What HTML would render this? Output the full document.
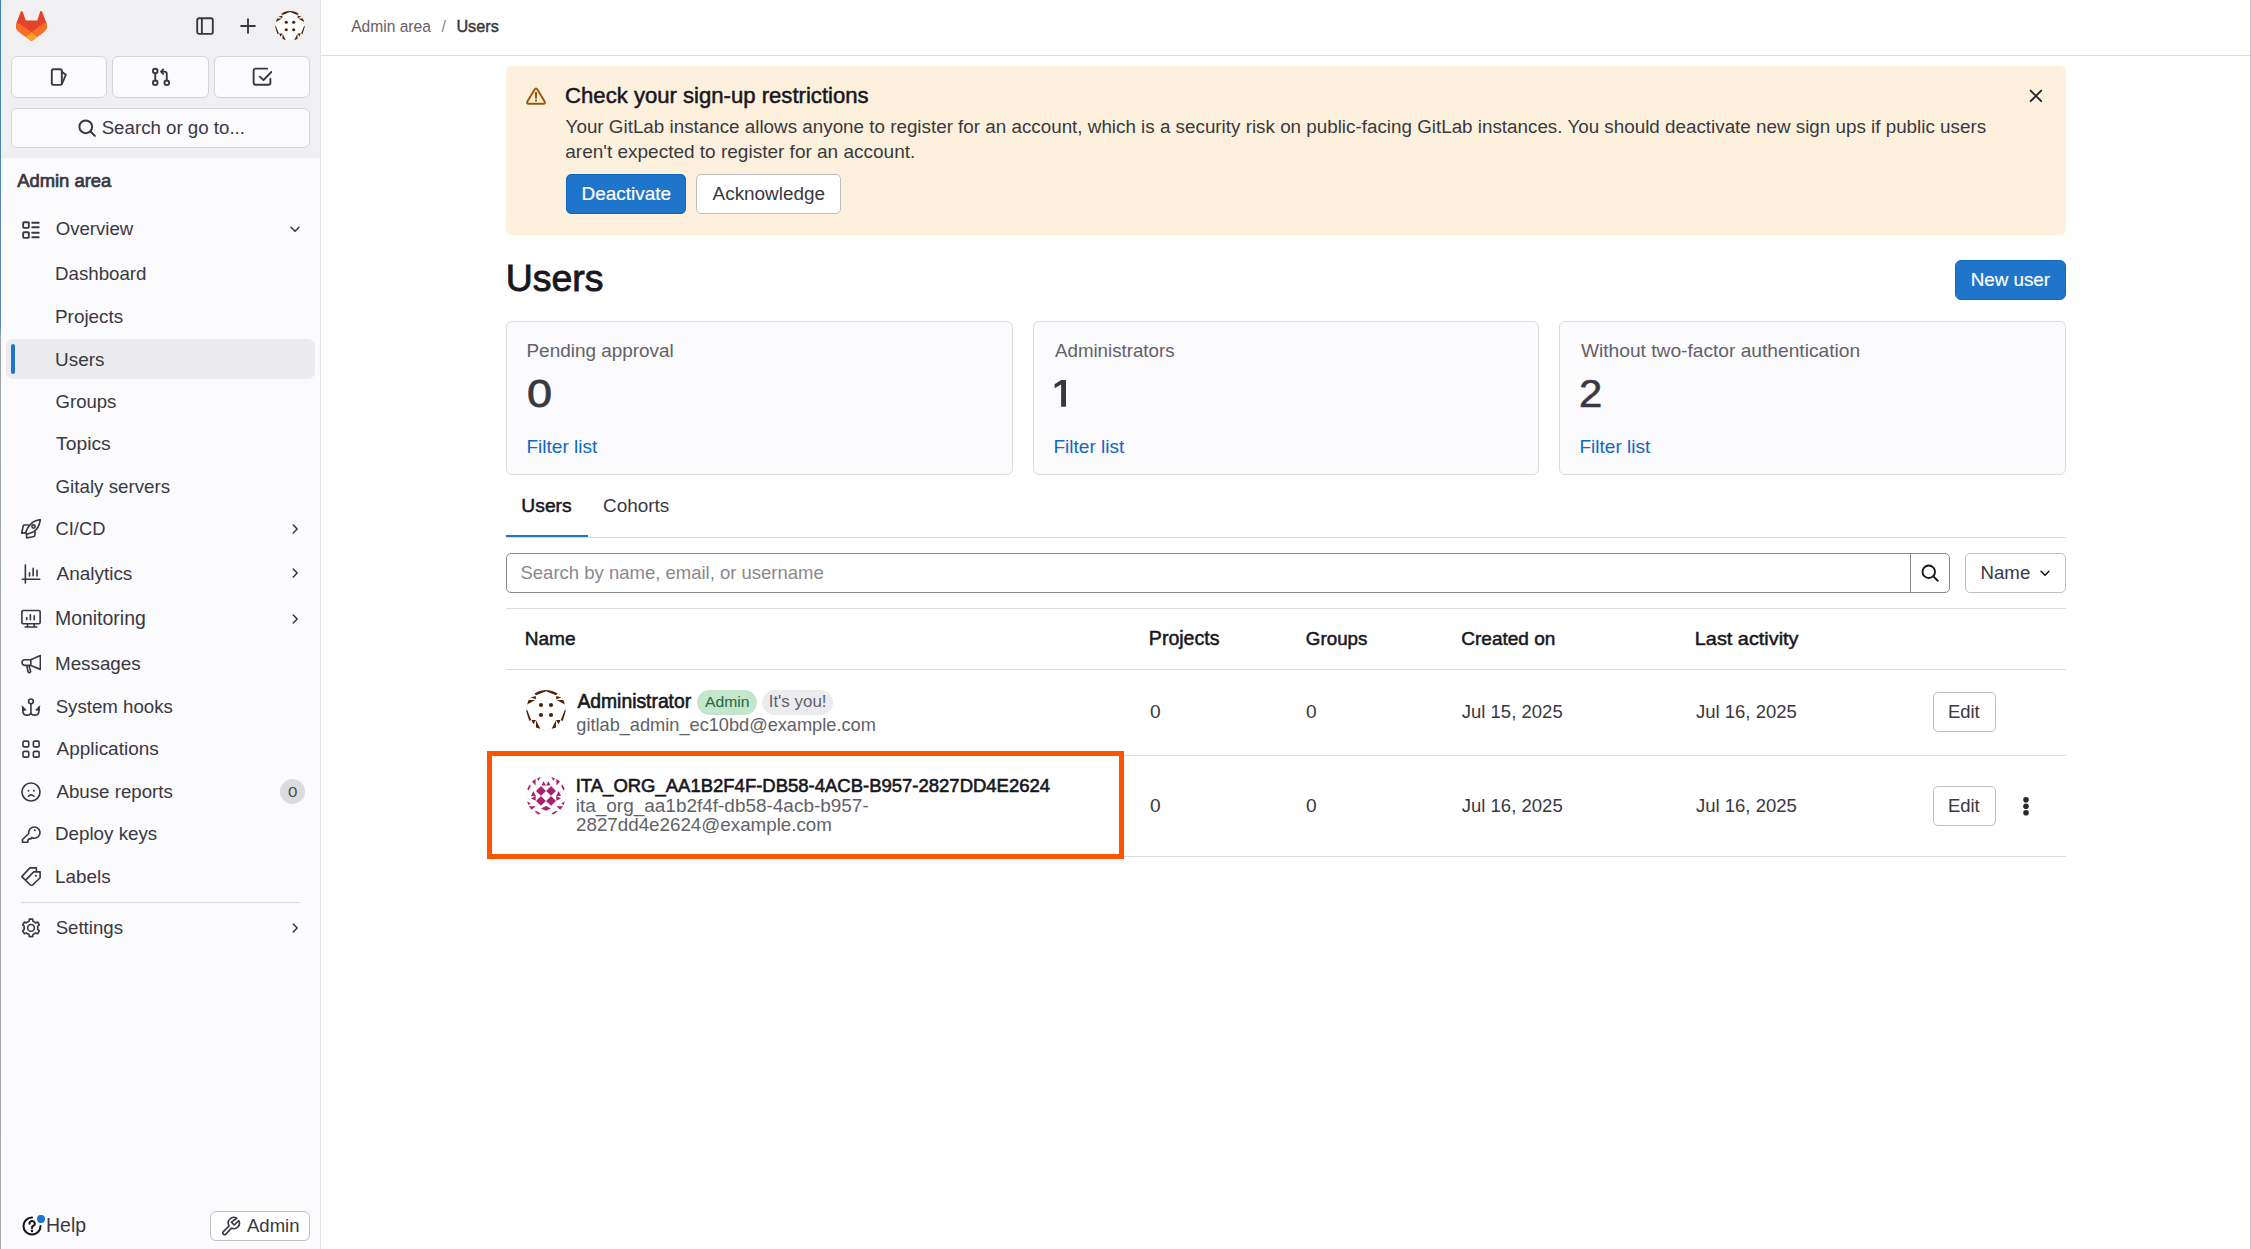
<!DOCTYPE html>
<html><head><meta charset="utf-8"><style>
html,body{margin:0;padding:0;}
body{width:2251px;height:1249px;position:relative;overflow:hidden;background:#fff;font-family:"Liberation Sans",sans-serif;}
.a{position:absolute;box-sizing:border-box;}
.t{position:absolute;white-space:pre;line-height:normal;}
</style></head><body>
<div class="a" style="left:0.0px;top:0.0px;width:320.0px;height:1249.0px;background:#fbfafd;"></div>
<div class="a" style="left:0.0px;top:0.0px;width:320.0px;height:158.0px;background:#f0f0f2;"></div>
<div class="a" style="left:320.0px;top:0.0px;width:1.0px;height:1249.0px;background:#e2e1e6;"></div>
<div class="a" style="left:0.0px;top:0.0px;width:1.0px;height:1249.0px;background:linear-gradient(#3f7fc6 0,#5a8cc0 26%,#9aa4ae 27%,#a8a8aa 100%);"></div>
<svg class="a" style="left:16.0px;top:11.0px;" width="31.0" height="30.0" viewBox="0 0 25 24"><path fill="#e24329" d="m24.507 9.5-.034-.09L21.082.562a.896.896 0 0 0-1.694.091l-2.29 7.01H7.825L5.535.653a.898.898 0 0 0-1.694-.09L.451 9.411.416 9.5a6.297 6.297 0 0 0 2.09 7.278l.012.01.03.022 5.16 3.867 2.56 1.935 1.554 1.176a1.051 1.051 0 0 0 1.268 0l1.555-1.176 2.56-1.935 5.197-3.89.014-.01A6.297 6.297 0 0 0 24.507 9.5Z"/><path fill="#fc6d26" d="m24.507 9.5-.034-.09a11.44 11.44 0 0 0-4.56 2.051l-7.447 5.632 4.742 3.584 5.197-3.89.014-.01A6.297 6.297 0 0 0 24.507 9.5Z"/><path fill="#fca326" d="m7.707 20.677 2.56 1.935 1.555 1.176a1.051 1.051 0 0 0 1.268 0l1.555-1.176 2.56-1.935-4.743-3.584-4.755 3.584Z"/><path fill="#fc6d26" d="M5.01 11.461a11.43 11.43 0 0 0-4.56-2.05L.416 9.5a6.297 6.297 0 0 0 2.09 7.278l.012.01.03.022 5.16 3.867 4.745-3.584-7.444-5.632Z"/></svg>
<svg class="a" style="left:195.0px;top:16.0px;" width="20.0" height="20.0" viewBox="0 0 16 16"><rect x="1.75" y="1.75" width="12.5" height="12.5" rx="1.5" fill="none" stroke="#3a383f" stroke-width="1.5" stroke-linecap="round" stroke-linejoin="round"/><path d="M5.5 2v12" fill="none" stroke="#3a383f" stroke-width="1.5" stroke-linecap="round" stroke-linejoin="round"/></svg>
<svg class="a" style="left:238.0px;top:16.0px;" width="20.0" height="20.0" viewBox="0 0 16 16"><path d="M8 2.5v11M2.5 8h11" fill="none" stroke="#3a383f" stroke-width="1.5" stroke-linecap="round" stroke-linejoin="round"/></svg>
<svg class="a" style="left:275.0px;top:10.8px;" width="30.0" height="30.0" viewBox="0 0 40 40"><defs><clipPath id="ca10"><circle cx="20" cy="20" r="20"/></clipPath></defs><circle cx="20" cy="20" r="19.7" fill="#fff" stroke="#ececef" stroke-width="0.6"/><g clip-path="url(#ca10)"><polygon points="8.00,3.00 20.00,-3.00 20.00,1.30 10.00,5.30" fill="#4f2207"/><polygon points="32.00,3.00 20.00,-3.00 20.00,1.30 30.00,5.30" fill="#4f2207"/><polygon points="4.50,7.50 9.80,5.90 9.80,9.30" fill="#4f2207"/><polygon points="35.50,7.50 30.20,5.90 30.20,9.30" fill="#4f2207"/><polygon points="2.30,9.90 9.30,9.90 1.10,14.60" fill="#4f2207"/><polygon points="37.70,9.90 30.70,9.90 38.90,14.60" fill="#4f2207"/><polygon points="0.00,20.30 1.20,20.00 5.20,30.00 3.30,31.00" fill="#4f2207"/><polygon points="40.00,20.30 38.80,20.00 34.80,30.00 36.70,31.00" fill="#4f2207"/><polygon points="5.50,30.00 10.00,30.00 7.40,34.30" fill="#4f2207"/><polygon points="34.50,30.00 30.00,30.00 32.60,34.30" fill="#4f2207"/><polygon points="10.00,30.30 10.00,38.00 14.30,38.80" fill="#4f2207"/><polygon points="30.00,30.30 30.00,38.00 25.70,38.80" fill="#4f2207"/><circle cx="15" cy="15" r="2.1" fill="#4f2207"/><circle cx="25" cy="15" r="2.1" fill="#4f2207"/><circle cx="15" cy="25" r="2.1" fill="#4f2207"/><circle cx="25" cy="25" r="2.1" fill="#4f2207"/></g></svg>
<div class="a" style="left:11.0px;top:56.0px;width:96.0px;height:42.0px;background:#fbfafd;border:1px solid #d5d5d9;border-radius:6px;"></div>
<div class="a" style="left:112.0px;top:56.0px;width:97.0px;height:42.0px;background:#fbfafd;border:1px solid #d5d5d9;border-radius:6px;"></div>
<div class="a" style="left:214.0px;top:56.0px;width:96.0px;height:42.0px;background:#fbfafd;border:1px solid #d5d5d9;border-radius:6px;"></div>
<svg class="a" style="left:49.0px;top:67.0px;" width="20.0" height="20.0" viewBox="0 0 16 16"><rect x="2.25" y="1.75" width="8" height="12.5" rx="1.25" fill="none" stroke="#3a383f" stroke-width="1.5" stroke-linecap="round" stroke-linejoin="round"/><path d="M10.5 4 L13.5 6.2 L10.3 13.6" fill="none" stroke="#3a383f" stroke-width="1.5" stroke-linecap="round" stroke-linejoin="round"/></svg>
<svg class="a" style="left:151.0px;top:67.0px;" width="20.0" height="20.0" viewBox="0 0 16 16"><circle cx="3.4" cy="3.2" r="1.85" fill="none" stroke="#3a383f" stroke-width="1.5" stroke-linecap="round" stroke-linejoin="round"/><circle cx="3.4" cy="12.6" r="1.85" fill="none" stroke="#3a383f" stroke-width="1.5" stroke-linecap="round" stroke-linejoin="round"/><circle cx="12.6" cy="12.6" r="1.85" fill="none" stroke="#3a383f" stroke-width="1.5" stroke-linecap="round" stroke-linejoin="round"/><path d="M3.4 5v5.8M12.6 10.8V5.6a1.9 1.9 0 0 0-1.9-1.9H8.3M9.8 1.9 8 3.7l1.8 1.8" fill="none" stroke="#3a383f" stroke-width="1.5" stroke-linecap="round" stroke-linejoin="round"/></svg>
<svg class="a" style="left:252.0px;top:67.0px;" width="20.0" height="20.0" viewBox="0 0 16 16"><path d="M12.2 1.3H2.9A1.6 1.6 0 0 0 1.3 2.9V12.6A1.6 1.6 0 0 0 2.9 14.2H13.1A1.6 1.6 0 0 0 14.7 12.6V9.3" fill="none" stroke="#3a383f" stroke-width="1.5" stroke-linecap="round" stroke-linejoin="round"/><path d="M6.2 7.7 9.2 10.4 15.5 4" fill="none" stroke="#3a383f" stroke-width="1.5" stroke-linecap="round" stroke-linejoin="round"/></svg>
<div class="a" style="left:11.0px;top:108.0px;width:299.0px;height:40.0px;background:#fbfafd;border:1px solid #d5d5d9;border-radius:6px;"></div>
<svg class="a" style="left:77.0px;top:117.5px;" width="20.0" height="20.0" viewBox="0 0 16 16"><circle cx="7" cy="7" r="5.1" fill="none" stroke="#3a383f" stroke-width="1.6"/><path d="M10.8 10.8 14.3 14.3" fill="none" stroke="#3a383f" stroke-width="1.6" stroke-linecap="round"/></svg>
<div class="t" style="left:101.66px;top:117.00px;font-size:18.69px;color:#3a383f;">Search or go to...</div>
<div class="t" style="left:17.20px;top:170.00px;font-size:18.42px;color:#3a383f;-webkit-text-stroke:0.70px #3a383f;">Admin area</div>
<svg class="a" style="left:21.0px;top:220.0px;" width="20.0" height="20.0" viewBox="0 0 16 16"><rect x="1.75" y="1.75" width="4.5" height="4.5" rx="0.6" fill="none" stroke="#3a383f" stroke-width="1.5" stroke-linecap="round" stroke-linejoin="round"/><rect x="1.75" y="9.75" width="4.5" height="4.5" rx="0.6" fill="none" stroke="#3a383f" stroke-width="1.5" stroke-linecap="round" stroke-linejoin="round"/><path d="M9 2.2h5.2M9 5.8h5.2M9 10.2h5.2M9 13.8h5.2" fill="none" stroke="#3a383f" stroke-width="1.5" stroke-linecap="round" stroke-linejoin="round"/></svg>
<div class="t" style="left:55.66px;top:218.00px;font-size:18.62px;color:#3a383f;">Overview</div>
<svg class="a" style="left:288.0px;top:222.0px;" width="14.0" height="14.0" viewBox="0 0 16 16"><path d="M3.5 6 8 10.5 12.5 6" fill="none" stroke="#3a383f" stroke-width="1.8" stroke-linecap="round" stroke-linejoin="round"/></svg>
<div class="a" style="left:6.0px;top:339.0px;width:309.0px;height:40.0px;background:#ececef;border-radius:7px;"></div>
<div class="a" style="left:11.0px;top:344.0px;width:4.0px;height:29.5px;background:#1f75cb;border-radius:2px;"></div>
<div class="t" style="left:55.00px;top:263.00px;font-size:18.72px;color:#3a383f;">Dashboard</div>
<div class="t" style="left:54.99px;top:306.00px;font-size:18.91px;color:#3a383f;">Projects</div>
<div class="t" style="left:55.08px;top:349.00px;font-size:18.92px;color:#3a383f;">Users</div>
<div class="t" style="left:55.57px;top:391.00px;font-size:18.56px;color:#3a383f;">Groups</div>
<div class="t" style="left:56.11px;top:433.00px;font-size:19.28px;color:#3a383f;">Topics</div>
<div class="t" style="left:55.56px;top:476.00px;font-size:18.74px;color:#3a383f;">Gitaly servers</div>
<div class="t" style="left:55.59px;top:518.00px;font-size:18.29px;color:#3a383f;">CI/CD</div>
<svg class="a" style="left:288.0px;top:521.8px;" width="14.0" height="14.0" viewBox="0 0 16 16"><path d="M6 3.5 10.5 8 6 12.5" fill="none" stroke="#3a383f" stroke-width="1.8" stroke-linecap="round" stroke-linejoin="round"/></svg>
<div class="t" style="left:56.50px;top:563.00px;font-size:18.97px;color:#3a383f;">Analytics</div>
<svg class="a" style="left:288.0px;top:566.2px;" width="14.0" height="14.0" viewBox="0 0 16 16"><path d="M6 3.5 10.5 8 6 12.5" fill="none" stroke="#3a383f" stroke-width="1.8" stroke-linecap="round" stroke-linejoin="round"/></svg>
<div class="t" style="left:54.94px;top:607.00px;font-size:19.47px;color:#3a383f;">Monitoring</div>
<svg class="a" style="left:288.0px;top:611.5px;" width="14.0" height="14.0" viewBox="0 0 16 16"><path d="M6 3.5 10.5 8 6 12.5" fill="none" stroke="#3a383f" stroke-width="1.8" stroke-linecap="round" stroke-linejoin="round"/></svg>
<div class="t" style="left:55.00px;top:653.00px;font-size:18.81px;color:#3a383f;">Messages</div>
<div class="t" style="left:55.66px;top:696.00px;font-size:18.68px;color:#3a383f;">System hooks</div>
<div class="t" style="left:56.50px;top:738.00px;font-size:18.97px;color:#3a383f;">Applications</div>
<div class="t" style="left:56.50px;top:781.00px;font-size:18.69px;color:#3a383f;">Abuse reports</div>
<div class="t" style="left:55.00px;top:823.00px;font-size:18.78px;color:#3a383f;">Deploy keys</div>
<div class="t" style="left:54.99px;top:866.00px;font-size:18.87px;color:#3a383f;">Labels</div>
<div class="t" style="left:55.66px;top:917.00px;font-size:18.64px;color:#3a383f;">Settings</div>
<svg class="a" style="left:288.0px;top:920.5px;" width="14.0" height="14.0" viewBox="0 0 16 16"><path d="M6 3.5 10.5 8 6 12.5" fill="none" stroke="#3a383f" stroke-width="1.8" stroke-linecap="round" stroke-linejoin="round"/></svg>
<svg class="a" style="left:21.0px;top:519.0px;" width="20.0" height="20.0" viewBox="0 0 16 16"><path d="M15.5 0.5C11 1 7.5 3.5 5.5 7L3.9 10.3Q3.7 11.8 4.9 12.2L10.2 10.2C13 8.3 14.8 5 15.5 0.5Z" fill="none" stroke="#3a383f" stroke-width="1.3" stroke-linecap="round" stroke-linejoin="round"/><circle cx="10" cy="6" r="1.3" fill="none" stroke="#3a383f" stroke-width="1.3" stroke-linecap="round" stroke-linejoin="round"/><path d="M5.8 4.8H2.6Q1.9 4.9 1.8 5.6L0.5 11.4 3.6 10.9M4.5 12.6V15.2L10.3 14Q10.9 13.9 11 13.3L11.3 10.2" fill="none" stroke="#3a383f" stroke-width="1.3" stroke-linecap="round" stroke-linejoin="round"/></svg>
<svg class="a" style="left:21.0px;top:564.0px;" width="20.0" height="20.0" viewBox="0 0 16 16"><path d="M3.5 0.8v14.4M1 12.2h14M6.8 7v2.6M9.7 3.5v5.8M12.8 5v4.6" fill="none" stroke="#3a383f" stroke-width="1.3" stroke-linecap="round" stroke-linejoin="round"/></svg>
<svg class="a" style="left:21.0px;top:609.0px;" width="20.0" height="20.0" viewBox="0 0 16 16"><rect x="0.7" y="1.2" width="14.6" height="10.6" rx="1" fill="none" stroke="#3a383f" stroke-width="1.3" stroke-linecap="round" stroke-linejoin="round"/><path d="M5.2 11.8v2.4M10.6 11.8v2.4M3.3 14.4h9.3M4.6 6.9v1.7M7.5 4.6v4M10.6 5.4v3.2" fill="none" stroke="#3a383f" stroke-width="1.3" stroke-linecap="round" stroke-linejoin="round"/></svg>
<svg class="a" style="left:21.0px;top:654.0px;" width="20.0" height="20.0" viewBox="0 0 16 16"><path d="M7.84 4.63H2.93A2.25 2.25 0 0 0 2.93 9.12H7.84ZM7.84 4.63 15.5 1.2V12.3L7.84 9.12M4.6 9.2 5.7 14.3A1.05 1.05 0 0 0 7.7 13.8L6.5 9.9" fill="none" stroke="#3a383f" stroke-width="1.3" stroke-linecap="round" stroke-linejoin="round"/></svg>
<svg class="a" style="left:21.0px;top:697.0px;" width="20.0" height="20.0" viewBox="0 0 16 16"><circle cx="7.93" cy="3.45" r="1.9" fill="none" stroke="#3a383f" stroke-width="1.3" stroke-linecap="round" stroke-linejoin="round"/><path d="M7.93 5.4V12.4M7.93 12.2C7.93 13.6 6.6 14.5 4.9 14.5 2.9 14.5 1.45 13.1 1.45 10.9V8.2M7.93 12.2C7.93 13.6 9.26 14.5 10.96 14.5 12.96 14.5 14.41 13.1 14.41 10.9V8.2" fill="none" stroke="#3a383f" stroke-width="1.3" stroke-linecap="round" stroke-linejoin="round"/><path d="M0.8 7 4.2 10.4 1.5 11ZM15.06 7 11.66 10.4 14.36 11Z" fill="#3a383f" stroke="#3a383f" stroke-width="0.5" stroke-linejoin="round"/></svg>
<svg class="a" style="left:21.0px;top:739.0px;" width="20.0" height="20.0" viewBox="0 0 16 16"><rect x="1.6" y="1.7" width="4.6" height="4.6" rx="1" fill="none" stroke="#3a383f" stroke-width="1.3" stroke-linecap="round" stroke-linejoin="round"/><rect x="9.9" y="1.7" width="4.6" height="4.6" rx="1" fill="none" stroke="#3a383f" stroke-width="1.3" stroke-linecap="round" stroke-linejoin="round"/><rect x="1.6" y="9.9" width="4.6" height="4.6" rx="1" fill="none" stroke="#3a383f" stroke-width="1.3" stroke-linecap="round" stroke-linejoin="round"/><rect x="9.9" y="9.9" width="4.6" height="4.6" rx="1" fill="none" stroke="#3a383f" stroke-width="1.3" stroke-linecap="round" stroke-linejoin="round"/></svg>
<svg class="a" style="left:21.0px;top:782.0px;" width="20.0" height="20.0" viewBox="0 0 16 16"><circle cx="8" cy="8" r="7.2" fill="none" stroke="#3a383f" stroke-width="1.3" stroke-linecap="round" stroke-linejoin="round"/><path d="M5.9 11.4Q8.1 9.2 10.4 11.4" fill="none" stroke="#3a383f" stroke-width="1.3" stroke-linecap="round" stroke-linejoin="round"/><circle cx="6" cy="7" r="0.75" fill="#3a383f"/><circle cx="10.3" cy="7" r="0.75" fill="#3a383f"/></svg>
<svg class="a" style="left:21.0px;top:824.0px;" width="20.0" height="20.0" viewBox="0 0 16 16"><path d="M6.2 7.6A4.5 4.5 0 1 1 8.4 10.8L7.9 11.9H6.5L5.5 12.9V14.6H1.2V12.4Z" fill="none" stroke="#3a383f" stroke-width="1.3" stroke-linecap="round" stroke-linejoin="round"/><circle cx="11" cy="5" r="0.8" fill="#3a383f"/></svg>
<svg class="a" style="left:21.0px;top:866.0px;" width="20.0" height="20.0" viewBox="0 0 16 16"><path d="M3.7 11.3 10.2 4.7H15.3V9.4L8.4 16 0.6 8.5 7.1 1.5H12.3V4.7" fill="none" stroke="#3a383f" stroke-width="1.3" stroke-linecap="round" stroke-linejoin="round"/><circle cx="11.9" cy="7.8" r="0.85" fill="#3a383f"/></svg>
<svg class="a" style="left:21.0px;top:918.0px;" width="20.0" height="20.0" viewBox="0 0 16 16"><path d="M5.25 3.14 L6.39 2.64 L6.65 0.93 L9.35 0.93 L9.61 2.64 L10.75 3.14 L11.75 3.88 L13.36 3.24 L14.71 5.59 L13.36 6.66 L13.50 7.90 L13.36 9.14 L14.71 10.21 L13.36 12.56 L11.75 11.92 L10.75 12.66 L9.61 13.16 L9.35 14.87 L6.65 14.87 L6.39 13.16 L5.25 12.66 L4.25 11.92 L2.64 12.56 L1.29 10.21 L2.64 9.14 L2.50 7.90 L2.64 6.66 L1.29 5.59 L2.64 3.24 L4.25 3.88Z" fill="none" stroke="#3a383f" stroke-width="1.3" stroke-linecap="round" stroke-linejoin="round"/><circle cx="8" cy="7.9" r="2.7" fill="none" stroke="#3a383f" stroke-width="1.3" stroke-linecap="round" stroke-linejoin="round"/></svg>
<div class="a" style="left:280px;top:779.3px;width:25px;height:25px;border-radius:50%;background:#dcdcde;"></div>
<div class="t" style="left:288.02px;top:783.00px;font-size:15.40px;color:#4c4b51;transform:scale(1.100,1.000);transform-origin:0 14px;">0</div>
<div class="a" style="left:21.0px;top:902.0px;width:279.0px;height:1.0px;background:#dcdcde;"></div>
<svg class="a" style="left:21.0px;top:1215.0px;" width="22.0" height="22.0" viewBox="0 0 16 16"><path d="M14.2 8A6.2 6.2 0 1 1 8 1.8" fill="none" stroke="#18171d" stroke-width="1.5" stroke-linecap="round"/><path d="M6.2 6.3a1.9 1.9 0 1 1 2.6 1.7c-.5.3-.8.6-.8 1.1v.5" fill="none" stroke="#18171d" stroke-width="1.5" stroke-linecap="round"/><circle cx="8" cy="11.7" r="0.9" fill="#18171d"/></svg>
<div class="a" style="left:37.2px;top:1214.5px;width:7.5px;height:8.5px;border-radius:50%;background:#1f75cb;"></div>
<div class="t" style="left:46.04px;top:1214.00px;font-size:19.48px;color:#3a383f;">Help</div>
<div class="a" style="left:210.0px;top:1211.0px;width:100.0px;height:30.0px;background:#fff;border:1px solid #bfbfc3;border-radius:6px;"></div>
<svg class="a" style="left:221.0px;top:1216.0px;" width="20.0" height="20.0" viewBox="0 0 16 16"><path d="M12.6 1.8A4.4 4.4 0 0 0 6.52 7.87L1.9 12.5A1.4 1.4 0 0 0 3.9 14.5L8.33 9.68A4.4 4.4 0 0 0 14.2 3.7L10.6 7.2 8.3 4.9Z" fill="none" stroke="#3a383f" stroke-width="1.3" stroke-linecap="round" stroke-linejoin="round"/></svg>
<div class="t" style="left:247.00px;top:1215.00px;font-size:18.52px;color:#3a383f;">Admin</div>
<div class="a" style="left:321.0px;top:55.0px;width:1929.0px;height:1.0px;background:#dcdcde;"></div>
<div class="a" style="left:2250.0px;top:0.0px;width:1.0px;height:1249.0px;background:#c8c8cc;"></div>
<div class="t" style="left:351.20px;top:18.00px;font-size:15.58px;color:#626168;">Admin area</div>
<div class="t" style="left:441.60px;top:18.00px;font-size:16.00px;color:#89888d;">/</div>
<div class="t" style="left:456.38px;top:17.00px;font-size:16.24px;color:#3a383f;-webkit-text-stroke:0.45px #3a383f;">Users</div>
<div class="a" style="left:506.0px;top:66.0px;width:1560.0px;height:169.0px;background:#fdf1dd;border-radius:6px;"></div>
<svg class="a" style="left:525.0px;top:84.0px;" width="22.0" height="22.0" viewBox="0 0 22 22"><path d="M9.6 5.5Q11 3.2 12.4 5.5L19.6 17.6Q20.8 19.8 18.3 19.8H3.7Q1.2 19.8 2.4 17.6Z" fill="none" stroke="#9e5400" stroke-width="1.9" stroke-linejoin="round"/><path d="M11 8.6V13.9" stroke="#9e5400" stroke-width="2" stroke-linecap="round"/><circle cx="11" cy="16.6" r="1.15" fill="#9e5400"/></svg>
<div class="t" style="left:565.09px;top:83.00px;font-size:22.12px;color:#18171d;-webkit-text-stroke:0.50px #18171d;">Check your sign-up restrictions</div>
<div class="t" style="left:565.62px;top:116.00px;font-size:18.82px;color:#3a383f;">Your GitLab instance allows anyone to register for an account, which is a security risk on public-facing GitLab instances. You should deactivate new sign ups if public users</div>
<div class="t" style="left:565.24px;top:141.00px;font-size:19.00px;color:#3a383f;">aren't expected to register for an account.</div>
<svg class="a" style="left:2029.0px;top:89.0px;" width="14.0" height="14.0" viewBox="0 0 14 14"><path d="M1.6 1.6 12.2 12.2M12.2 1.6 1.6 12.2" fill="none" stroke="#28272d" stroke-width="1.9" stroke-linecap="round"/></svg>
<div class="a" style="left:566.0px;top:174.0px;width:120.0px;height:40.0px;background:#1f75cb;border:1px solid #1068bf;border-radius:5px;"></div>
<div class="t" style="left:581.49px;top:183.00px;font-size:18.94px;color:#fff;-webkit-text-stroke:0.20px #fff;">Deactivate</div>
<div class="a" style="left:696.0px;top:174.0px;width:145.0px;height:40.0px;background:#fff;border:1px solid #bfbfc3;border-radius:5px;"></div>
<div class="t" style="left:712.60px;top:183.00px;font-size:18.90px;color:#3a383f;">Acknowledge</div>
<div class="t" style="left:505.69px;top:257.00px;font-size:37.44px;color:#18171d;-webkit-text-stroke:0.90px #18171d;">Users</div>
<div class="a" style="left:1955.0px;top:260.0px;width:111.0px;height:40.0px;background:#1f75cb;border:1px solid #1068bf;border-radius:6px;"></div>
<div class="t" style="left:1970.69px;top:269.00px;font-size:18.81px;color:#fff;-webkit-text-stroke:0.20px #fff;">New user</div>
<div class="a" style="left:506.0px;top:321.0px;width:507.0px;height:154.0px;background:#fbfafd;border:1px solid #dcdcde;border-radius:6px;"></div>
<div class="t" style="left:526.49px;top:340.00px;font-size:18.93px;color:#626168;">Pending approval</div>
<div class="t" style="left:526.60px;top:371.00px;font-size:39.50px;color:#3a383f;-webkit-text-stroke:0.80px #3a383f;transform:scale(1.140,1.000);transform-origin:0 36px;">0</div>
<div class="t" style="left:526.47px;top:436.00px;font-size:19.06px;color:#1068bf;">Filter list</div>
<div class="a" style="left:1033.0px;top:321.0px;width:506.0px;height:154.0px;background:#fbfafd;border:1px solid #dcdcde;border-radius:6px;"></div>
<div class="t" style="left:1055.00px;top:340.00px;font-size:18.71px;color:#626168;">Administrators</div>
<svg class="a" style="left:1050.0px;top:375.0px;" width="20.0" height="35.0" viewBox="1050 375 20 35"><polygon points="1054.6,384.2 1061.1,379.9 1066,379.9 1066,406.7 1061.1,406.7 1061.1,384.4 1054.6,388.2" fill="#3a383f"/></svg>
<div class="t" style="left:1053.47px;top:436.00px;font-size:19.06px;color:#1068bf;">Filter list</div>
<div class="a" style="left:1559.0px;top:321.0px;width:507.0px;height:154.0px;background:#fbfafd;border:1px solid #dcdcde;border-radius:6px;"></div>
<div class="t" style="left:1580.90px;top:340.00px;font-size:19.18px;color:#626168;">Without two-factor authentication</div>
<div class="t" style="left:1579.31px;top:371.00px;font-size:39.50px;color:#3a383f;-webkit-text-stroke:0.60px #3a383f;transform:scale(1.060,1.000);transform-origin:0 36px;">2</div>
<div class="t" style="left:1579.47px;top:436.00px;font-size:19.06px;color:#1068bf;">Filter list</div>
<div class="t" style="left:521.35px;top:495.00px;font-size:19.28px;color:#18171d;-webkit-text-stroke:0.50px #18171d;">Users</div>
<div class="t" style="left:603.05px;top:495.00px;font-size:18.92px;color:#3a383f;">Cohorts</div>
<div class="a" style="left:506.0px;top:537.0px;width:1560.0px;height:1.0px;background:#dcdcde;"></div>
<div class="a" style="left:506.0px;top:535.0px;width:82.0px;height:2.0px;background:#1f75cb;"></div>
<div class="a" style="left:506.0px;top:553.0px;width:1444.0px;height:40.0px;background:#fff;border:1px solid #89888d;border-radius:5px;"></div>
<div class="a" style="left:1910.0px;top:553.0px;width:1.0px;height:40.0px;background:#89888d;"></div>
<div class="t" style="left:520.47px;top:562.00px;font-size:18.50px;color:#89888d;">Search by name, email, or username</div>
<svg class="a" style="left:1920.0px;top:563.0px;" width="20.0" height="20.0" viewBox="0 0 16 16"><circle cx="7" cy="7" r="5" fill="none" stroke="#18171d" stroke-width="1.5"/><path d="M10.7 10.7 14.2 14.2" fill="none" stroke="#18171d" stroke-width="1.5" stroke-linecap="round"/></svg>
<div class="a" style="left:1965.0px;top:553.0px;width:101.0px;height:40.0px;background:#fff;border:1px solid #bfbfc3;border-radius:5px;"></div>
<div class="t" style="left:1980.51px;top:562.00px;font-size:18.66px;color:#3a383f;">Name</div>
<svg class="a" style="left:2038.0px;top:566.0px;" width="14.0" height="14.0" viewBox="0 0 16 16"><path d="M3.5 6 8 10.5 12.5 6" fill="none" stroke="#18171d" stroke-width="1.8" stroke-linecap="round" stroke-linejoin="round"/></svg>
<div class="a" style="left:506.0px;top:608.0px;width:1560.0px;height:1.0px;background:#dcdcde;"></div>
<div class="t" style="left:524.67px;top:628.00px;font-size:19.10px;color:#18171d;-webkit-text-stroke:0.50px #18171d;">Name</div>
<div class="t" style="left:1148.83px;top:627.00px;font-size:19.57px;color:#18171d;-webkit-text-stroke:0.50px #18171d;">Projects</div>
<div class="t" style="left:1305.86px;top:628.00px;font-size:18.78px;color:#18171d;-webkit-text-stroke:0.50px #18171d;">Groups</div>
<div class="t" style="left:1461.25px;top:628.00px;font-size:19.05px;color:#18171d;-webkit-text-stroke:0.50px #18171d;">Created on</div>
<div class="t" style="left:1694.81px;top:627.00px;font-size:19.86px;color:#18171d;-webkit-text-stroke:0.50px #18171d;transform:scale(1.000,0.959);transform-origin:0 18px;">Last activity</div>
<div class="a" style="left:506.0px;top:669.0px;width:1560.0px;height:1.0px;background:#dcdcde;"></div>
<div class="a" style="left:506.0px;top:755.0px;width:1560.0px;height:1.0px;background:#dcdcde;"></div>
<div class="a" style="left:506.0px;top:856.0px;width:1560.0px;height:1.0px;background:#dcdcde;"></div>
<svg class="a" style="left:526.1px;top:689.8px;" width="40.0" height="40.0" viewBox="0 0 40 40"><defs><clipPath id="ca689"><circle cx="20" cy="20" r="20"/></clipPath></defs><circle cx="20" cy="20" r="19.7" fill="#fff" stroke="#ececef" stroke-width="0.6"/><g clip-path="url(#ca689)"><polygon points="8.00,3.00 20.00,-3.00 20.00,1.30 10.00,5.30" fill="#4f2207"/><polygon points="32.00,3.00 20.00,-3.00 20.00,1.30 30.00,5.30" fill="#4f2207"/><polygon points="4.50,7.50 9.80,5.90 9.80,9.30" fill="#4f2207"/><polygon points="35.50,7.50 30.20,5.90 30.20,9.30" fill="#4f2207"/><polygon points="2.30,9.90 9.30,9.90 1.10,14.60" fill="#4f2207"/><polygon points="37.70,9.90 30.70,9.90 38.90,14.60" fill="#4f2207"/><polygon points="0.00,20.30 1.20,20.00 5.20,30.00 3.30,31.00" fill="#4f2207"/><polygon points="40.00,20.30 38.80,20.00 34.80,30.00 36.70,31.00" fill="#4f2207"/><polygon points="5.50,30.00 10.00,30.00 7.40,34.30" fill="#4f2207"/><polygon points="34.50,30.00 30.00,30.00 32.60,34.30" fill="#4f2207"/><polygon points="10.00,30.30 10.00,38.00 14.30,38.80" fill="#4f2207"/><polygon points="30.00,30.30 30.00,38.00 25.70,38.80" fill="#4f2207"/><circle cx="15" cy="15" r="2.1" fill="#4f2207"/><circle cx="25" cy="15" r="2.1" fill="#4f2207"/><circle cx="15" cy="25" r="2.1" fill="#4f2207"/><circle cx="25" cy="25" r="2.1" fill="#4f2207"/></g></svg>
<div class="t" style="left:577.40px;top:691.00px;font-size:19.32px;color:#18171d;-webkit-text-stroke:0.60px #18171d;">Administrator</div>
<div class="a" style="left:697.0px;top:690.0px;width:60.0px;height:25.0px;background:#c3e6cd;border-radius:12.5px;"></div>
<div class="t" style="left:705.00px;top:693.00px;font-size:15.71px;color:#24663b;transform:scale(1.000,0.940);transform-origin:0 14px;">Admin</div>
<div class="a" style="left:762.0px;top:690.0px;width:71.0px;height:25.0px;background:#ececef;border-radius:12.5px;"></div>
<div class="t" style="left:768.68px;top:692.00px;font-size:16.94px;color:#626168;transform:scale(1.000,0.940);transform-origin:0 15px;">It's you!</div>
<div class="t" style="left:576.27px;top:715.00px;font-size:18.20px;color:#626168;">gitlab_admin_ec10bd@example.com</div>
<div class="t" style="left:1149.73px;top:701.00px;font-size:18.40px;color:#3a383f;transform:scale(1.040,1.000);transform-origin:0 17px;">0</div>
<div class="t" style="left:1305.83px;top:701.00px;font-size:18.40px;color:#3a383f;transform:scale(1.040,1.000);transform-origin:0 17px;">0</div>
<div class="t" style="left:1461.72px;top:701.00px;font-size:18.54px;color:#3a383f;">Jul 15, 2025</div>
<div class="t" style="left:1695.92px;top:701.00px;font-size:18.54px;color:#3a383f;">Jul 16, 2025</div>
<div class="a" style="left:1933.0px;top:692.0px;width:63.0px;height:40.0px;background:#fff;border:1px solid #bfbfc3;border-radius:5px;"></div>
<div class="t" style="left:1947.92px;top:701.00px;font-size:18.47px;color:#3a383f;">Edit</div>
<svg class="a" style="left:526.0px;top:776.0px;" width="40.0" height="40.0" viewBox="0 0 40 40"><circle cx="20" cy="20" r="19.7" fill="#fff" stroke="#ececef" stroke-width="0.6"/><polygon points="11.20,2.30 14.70,1.10 12.40,4.90" fill="#ab1f6f"/><polygon points="28.80,2.30 25.30,1.10 27.60,4.90" fill="#ab1f6f"/><polygon points="6.00,5.40 9.70,3.10 9.50,9.40" fill="#ab1f6f"/><polygon points="34.00,5.40 30.30,3.10 30.50,9.40" fill="#ab1f6f"/><polygon points="1.40,12.70 3.70,8.40 4.80,10.00 2.40,14.80" fill="#ab1f6f"/><polygon points="38.60,12.70 36.30,8.40 35.20,10.00 37.60,14.80" fill="#ab1f6f"/><polygon points="15.50,9.50 17.50,5.20 20.00,9.50" fill="#ab1f6f"/><polygon points="24.50,9.50 22.50,5.20 20.00,9.50" fill="#ab1f6f"/><polygon points="10.00,14.90 14.95,9.95 19.90,14.90 14.95,19.85" fill="#ab1f6f"/><polygon points="30.00,14.90 25.05,9.95 20.10,14.90 25.05,19.85" fill="#ab1f6f"/><polygon points="7.40,15.00 5.00,20.00 9.80,20.00" fill="#ab1f6f"/><polygon points="32.60,15.00 35.00,20.00 30.20,20.00" fill="#ab1f6f"/><polygon points="5.00,22.50 9.70,19.80 9.70,24.80" fill="#ab1f6f"/><polygon points="35.00,22.50 30.30,19.80 30.30,24.80" fill="#ab1f6f"/><polygon points="10.00,24.90 14.95,19.95 19.90,24.90 14.95,29.85" fill="#ab1f6f"/><polygon points="30.00,24.90 25.05,19.95 20.10,24.90 25.05,29.85" fill="#ab1f6f"/><polygon points="1.20,25.60 4.80,27.50 2.40,29.00" fill="#ab1f6f"/><polygon points="38.80,25.60 35.20,27.50 37.60,29.00" fill="#ab1f6f"/><polygon points="3.00,30.30 9.80,30.30 5.60,33.80" fill="#ab1f6f"/><polygon points="37.00,30.30 30.20,30.30 34.40,33.80" fill="#ab1f6f"/><polygon points="8.60,35.20 10.40,35.00 14.70,37.50 12.40,38.60" fill="#ab1f6f"/><polygon points="31.40,35.20 29.60,35.00 25.30,37.50 27.60,38.60" fill="#ab1f6f"/><polygon points="15.00,32.50 20.00,30.00 20.00,34.80" fill="#ab1f6f"/><polygon points="25.00,32.50 20.00,30.00 20.00,34.80" fill="#ab1f6f"/></svg>
<div class="t" style="left:575.74px;top:775.00px;font-size:18.49px;color:#18171d;-webkit-text-stroke:0.60px #18171d;">ITA_ORG_AA1B2F4F-DB58-4ACB-B957-2827DD4E2624</div>
<div class="t" style="left:575.77px;top:795.00px;font-size:18.96px;color:#626168;">ita_org_aa1b2f4f-db58-4acb-b957-</div>
<div class="t" style="left:576.06px;top:814.00px;font-size:18.78px;color:#626168;">2827dd4e2624@example.com</div>
<div class="t" style="left:1149.73px;top:795.00px;font-size:18.40px;color:#3a383f;transform:scale(1.040,1.000);transform-origin:0 17px;">0</div>
<div class="t" style="left:1305.83px;top:795.00px;font-size:18.40px;color:#3a383f;transform:scale(1.040,1.000);transform-origin:0 17px;">0</div>
<div class="t" style="left:1461.72px;top:795.00px;font-size:18.54px;color:#3a383f;">Jul 16, 2025</div>
<div class="t" style="left:1695.92px;top:795.00px;font-size:18.54px;color:#3a383f;">Jul 16, 2025</div>
<div class="a" style="left:1933.0px;top:786.0px;width:63.0px;height:40.0px;background:#fff;border:1px solid #bfbfc3;border-radius:5px;"></div>
<div class="t" style="left:1947.92px;top:795.00px;font-size:18.47px;color:#3a383f;">Edit</div>
<svg class="a" style="left:2020.0px;top:793.0px;" width="12.0" height="26.0" viewBox="0 0 12 26"><circle cx="6" cy="6.7" r="2.8" fill="#28272d"/><circle cx="6" cy="13.2" r="2.8" fill="#28272d"/><circle cx="6" cy="19.8" r="2.8" fill="#28272d"/></svg>
<div class="a" style="left:487.0px;top:751.0px;width:637.0px;height:108.0px;border:5px solid #ff5300;"></div>
</body></html>
